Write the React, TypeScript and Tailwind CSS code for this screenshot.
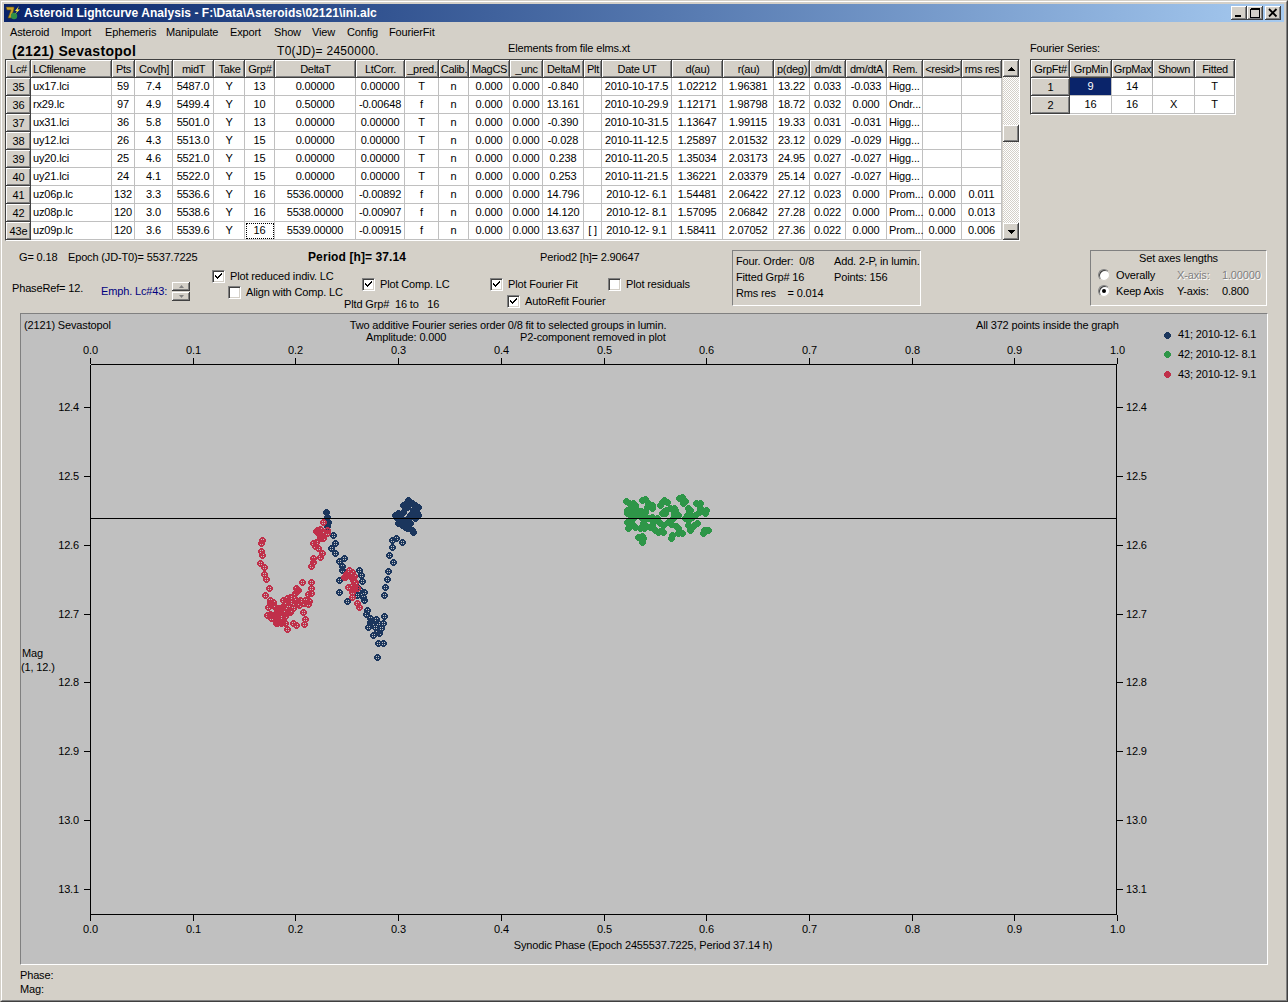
import React from "react";

const raised =
  "shadow-[inset_-1px_-1px_0_#404040,inset_1px_1px_0_#ffffff,inset_-2px_-2px_0_#808080] bg-[#d4d0c8]";

const gridCols =
  "grid grid-cols-[25px_81px_23px_38px_41px_31px_30px_81px_49px_34px_30px_41px_33px_41px_18px_70px_51px_51px_36px_36px_41px_36px_39px_40px]";

const headers = ["Lc#", "LCfilename", "Pts", "Cov[h]", "midT", "Take", "Grp#", "DeltaT", "LtCorr.", "_pred.", "Calib.", "MagCS", "_unc", "DeltaM", "Plt", "Date UT", "d(au)", "r(au)", "p(deg)", "dm/dt", "dm/dtA", "Rem.", "<resid>", "rms res"];

const rows: string[][] = [
  ["35", "ux17.lci", "59", "7.4", "5487.0", "Y", "13", "0.00000", "0.00000", "T", "n", "0.000", "0.000", "-0.840", "", "2010-10-17.5", "1.02212", "1.96381", "13.22", "0.033", "-0.033", "Higg...", "", ""],
  ["36", "rx29.lc", "97", "4.9", "5499.4", "Y", "10", "0.50000", "-0.00648", "f", "n", "0.000", "0.000", "13.161", "", "2010-10-29.9", "1.12171", "1.98798", "18.72", "0.032", "0.000", "Ondr...", "", ""],
  ["37", "ux31.lci", "36", "5.8", "5501.0", "Y", "13", "0.00000", "0.00000", "T", "n", "0.000", "0.000", "-0.390", "", "2010-10-31.5", "1.13647", "1.99115", "19.33", "0.031", "-0.031", "Higg...", "", ""],
  ["38", "uy12.lci", "26", "4.3", "5513.0", "Y", "15", "0.00000", "0.00000", "T", "n", "0.000", "0.000", "-0.028", "", "2010-11-12.5", "1.25897", "2.01532", "23.12", "0.029", "-0.029", "Higg...", "", ""],
  ["39", "uy20.lci", "25", "4.6", "5521.0", "Y", "15", "0.00000", "0.00000", "T", "n", "0.000", "0.000", "0.238", "", "2010-11-20.5", "1.35034", "2.03173", "24.95", "0.027", "-0.027", "Higg...", "", ""],
  ["40", "uy21.lci", "24", "4.1", "5522.0", "Y", "15", "0.00000", "0.00000", "T", "n", "0.000", "0.000", "0.253", "", "2010-11-21.5", "1.36221", "2.03379", "25.14", "0.027", "-0.027", "Higg...", "", ""],
  ["41", "uz06p.lc", "132", "3.3", "5536.6", "Y", "16", "5536.00000", "-0.00892", "f", "n", "0.000", "0.000", "14.796", "", "2010-12- 6.1", "1.54481", "2.06422", "27.12", "0.023", "0.000", "Prom...", "0.000", "0.011"],
  ["42", "uz08p.lc", "120", "3.0", "5538.6", "Y", "16", "5538.00000", "-0.00907", "f", "n", "0.000", "0.000", "14.120", "", "2010-12- 8.1", "1.57095", "2.06842", "27.28", "0.022", "0.000", "Prom...", "0.000", "0.013"],
  ["43e", "uz09p.lc", "120", "3.6", "5539.6", "Y", "16", "5539.00000", "-0.00915", "f", "n", "0.000", "0.000", "13.637", "[ ]", "2010-12- 9.1", "1.58411", "2.07052", "27.36", "0.022", "0.000", "Prom...", "0.000", "0.006"],
];

const clover = ["..XXX..", ".XXXXX.", "XX.X.XX", "XXXXXXX", "XX.X.XX", ".XXXXX.", "..XXX.."];
const solid = ["..XXX..", ".XXXXX.", "XXXXXXX", "XXXXXXX", "XXXXXXX", ".XXXXX.", "..XXX.."];

function Sprite({ id, pattern }: { id: string; pattern: string[] }) {
  return (
    <g id={id}>
      {pattern.flatMap((row, y) =>
        row.split("").map((c, x) => (c === "X" ? <rect key={`${x}-${y}`} x={x - 3} y={y - 3} width={1} height={1} /> : null))
      )}
    </g>
  );
}

const z5 = (p: number[]) => [Math.round(240 + p[0] / 3), Math.round(490 + p[1] / 3)];
const z6 = (p: number[]) => [Math.round(610 + p[0] / 3), Math.round(485 + p[1] / 3)];

// Fixed jitter so that dense clusters fill in as they do in the reference
const jitter = [[8, 6], [-9, 5], [6, -8], [-7, -6], [11, -2], [-3, 10], [2, -11], [-11, -1]];
const thicken = (pts: number[][]) =>
  pts.flatMap((p, i) => [p, [p[0] + jitter[i % 8][0], p[1] + jitter[i % 8][1]]]);

const navyClover = [[280,135],[285,158],[272,175],[285,190],[313,205],[298,213],[305,228],[305,240],[358,240],[362,255],[365,272],[297,270],[350,290],[298,305],[372,305],[350,315],[322,332],[372,330],[382,360],[378,372],[390,385],[432,378],[428,398],[408,388],[385,410],[405,410],[422,415],[400,435],[418,430],[415,460],[428,460],[412,502],[432,316],[436,290],[440,268],[445,242],[460,217],[448,195],[455,172],[455,150],[468,145],[487,157],[395,400],[415,400],[410,425],[390,395],[370,320],[360,300]].map(z5);
const navySolid = [[258,65],[262,80],[265,95],[262,108],[505,30],[525,45],[500,50],[530,70],[510,75],[475,70],[490,90],[475,100],[500,100],[515,120],[470,85],[520,60],[495,110],[505,85],[490,65],[490,45],[535,50],[535,75],[525,85],[480,80],[510,100],[520,125],[500,35],[465,75],[485,105],[515,40],[500,115],[480,90]].map(z5);
const redCore = [[90,330],[100,335],[85,350],[105,350],[80,375],[95,375],[110,370],[125,355],[130,330],[150,320],[165,310],[175,300],[203,312],[195,330],[205,343],[180,330],[170,340],[160,355],[145,345],[135,365],[125,380],[115,390],[107,400],[135,400],[160,400],[150,365],[120,360],[110,380]];
const redTop = [[225,168],[228,155],[240,145],[235,130],[230,120],[245,130],[260,130],[250,145]];
const redMid = [[328,240],[320,255],[335,265],[345,275],[325,290],[340,297],[315,262],[350,295]];
const redOther = [[67,150],[64,160],[62,183],[65,195],[60,220],[72,230],[73,253],[78,268],[88,295],[75,315],[185,277],[212,275],[212,295],[140,418],[190,365],[195,388],[192,403],[218,205],[220,215],[214,227],[245,190],[240,200],[250,95],[335,320],[352,340],[358,352]];
const redClover = [...redOther, ...thicken(redCore), ...thicken(redTop), ...thicken(redMid)].map(z5);
const greenSolid = thicken([[48,48],[60,70],[50,85],[75,60],[95,45],[115,55],[125,70],[105,80],[85,90],[60,105],[55,130],[75,125],[85,155],[100,160],[100,115],[120,125],[135,135],[140,100],[150,60],[170,50],[180,70],[195,75],[165,85],[160,140],[150,115],[215,35],[220,55],[240,75],[258,55],[270,70],[285,85],[245,95],[235,120],[260,115],[240,135],[205,130],[205,145],[185,150],[280,145],[295,135],[175,110],[125,95],[230,90],[70,100],[90,130],[130,110],[190,100],[255,90],[225,100],[80,75],[155,85],[205,90],[110,100]]).map(z6);

const xTick = (i: number) => Math.round(90 + 102.7 * i) + 0.5;
const yVals = [["12.4", 407], ["12.5", 476], ["12.6", 545], ["12.7", 614], ["12.8", 682], ["12.9", 751], ["13.0", 820], ["13.1", 889]] as [string, number][];

function Plot() {
  const ticks = Array.from({ length: 11 }, (_, i) => i);
  return (
    <svg viewBox="21 314 1246 650" width={1246} height={650} className="block text-[11px]">
      <defs>
        <Sprite id="clover" pattern={clover} />
        <Sprite id="solid" pattern={solid} />
      </defs>
      <text x={24} y={329}>(2121) Sevastopol</text>
      <text x={508} y={329} textAnchor="middle">Two additive Fourier series order 0/8 fit to selected groups in lumin.</text>
      <text x={366} y={341}>Amplitude: 0.000</text>
      <text x={520} y={341}>P2-component removed in plot</text>
      <text x={976} y={329}>All 372 points inside the graph</text>
      <g stroke="#000" shapeRendering="crispEdges" fill="none">
        <path d="M90.5 364.5H1117M90.5 914.5H1117M90.5 364.5V915M1116.5 364.5V915" />
        {ticks.map((i) => (
          <path key={i} d={`M${xTick(i)} 358V364M${xTick(i)} 915V921`} />
        ))}
        {yVals.map(([l, y]) => (
          <path key={l} d={`M84 ${y + 0.5}H90M1117 ${y + 0.5}H1123`} />
        ))}
      </g>
      {ticks.map((i) => (
        <g key={i} textAnchor="middle">
          <text x={xTick(i)} y={354}>{(i / 10).toFixed(1)}</text>
          <text x={xTick(i)} y={933}>{(i / 10).toFixed(1)}</text>
        </g>
      ))}
      {yVals.map(([l, y]) => (
        <g key={l}>
          <text x={79} y={y + 4} textAnchor="end">{l}</text>
          <text x={1126} y={y + 4}>{l}</text>
        </g>
      ))}
      <text x={643} y={949} textAnchor="middle">Synodic Phase (Epoch 2455537.7225, Period 37.14 h)</text>
      <text x={22} y={657}>Mag</text>
      <text x={21} y={671}>(1, 12.)</text>
      <g shapeRendering="crispEdges">
        <g fill="#1b365d">
          {navySolid.map(([x, y], i) => <use key={i} href="#solid" x={x} y={y} />)}
          {navyClover.map(([x, y], i) => <use key={i} href="#clover" x={x} y={y} />)}
        </g>
        <g fill="#2e9648">
          {greenSolid.map(([x, y], i) => <use key={i} href="#solid" x={x} y={y} />)}
        </g>
        <g fill="#c0304a">
          {redClover.map(([x, y], i) => <use key={i} href="#clover" x={x} y={y} />)}
        </g>
        <path d="M90 518.5H1116.5" stroke="#000" fill="none" />
        <use href="#solid" x={1167} y={335} fill="#1b365d" />
        <use href="#solid" x={1167} y={354} fill="#2e9648" />
        <use href="#solid" x={1167} y={374} fill="#c0304a" />
      </g>
      <text x={1178} y={338}>41; 2010-12- 6.1</text>
      <text x={1178} y={358}>42; 2010-12- 8.1</text>
      <text x={1178} y={378}>43; 2010-12- 9.1</text>
    </svg>
  );
}

function Check({ on, label, className }: { on: boolean; label: string; className?: string }) {
  return (
    <div className={`flex items-center h-[13px] whitespace-nowrap ${className ?? ""}`}>
      <span className="w-[13px] h-[13px] bg-white border border-t-[#808080] border-l-[#808080] border-r-white border-b-white shadow-[inset_1px_1px_0_#404040,inset_-1px_-1px_0_#d4d0c8] flex items-center justify-center shrink-0">
        {on && (
          <svg width="9" height="9" viewBox="0 0 9 9" shapeRendering="crispEdges">
            <path d="M1 3h1v1h1v1h1V4h1V3h1V2h1V1h1v2H7v1H6v1H5v1H4v1H3V6H2V5H1z" fill="#000" />
          </svg>
        )}
      </span>
      <span className="ml-[5px]">{label}</span>
    </div>
  );
}

function Radio({ on }: { on: boolean }) {
  return (
    <span className="w-[12px] h-[12px] rounded-full bg-white border border-t-[#808080] border-l-[#808080] border-r-[#d4d0c8] border-b-[#d4d0c8] shadow-[inset_1px_1px_0_#404040] flex items-center justify-center shrink-0">
      {on && <span className="w-[4px] h-[4px] rounded-full bg-black" />}
    </span>
  );
}

function Logo() {
  return (
    <svg width="16" height="16" viewBox="0 0 16 16" className="shrink-0">
      <rect width="16" height="16" fill="#0a246a" />
      <path d="M1 2H9V4L6 13H3L6 5H2Z" fill="#c9a227" stroke="#5a4a10" strokeWidth="0.6" />
      <circle cx="9" cy="11" r="3.2" fill="#2f8f46" />
      <path d="M14 1L10 6L12 6L10 9L15 4.5L12.5 4.5Z" fill="#ffe93b" />
    </svg>
  );
}

export default function App() {
  return (
    <div className="w-[1288px] h-[1002px] overflow-hidden bg-[#d4d0c8] text-[11px] leading-none tracking-[-0.15px] text-black font-['Liberation_Sans',Arial,sans-serif] border border-t-[#d4d0c8] border-l-[#d4d0c8] border-r-[#404040] border-b-[#404040]">
      <div className="h-full border border-t-white border-l-white border-r-[#808080] border-b-[#808080] p-[2px] flex flex-col">
        {/* Title bar */}
        <div className="h-[18px] shrink-0 flex items-center pl-[1px] pr-[3px] bg-gradient-to-r from-[#0a246a] to-[#a6caf0]">
          <Logo />
          <span className="ml-[3px] text-white font-bold text-[12px] tracking-[0.05px]">Asteroid Lightcurve Analysis - F:\Data\Asteroids\02121\ini.alc</span>
          <div className="ml-auto flex items-center">
            <span className={`w-[16px] h-[14px] ${raised} flex items-center justify-center`}>
              <svg width="10" height="10" shapeRendering="crispEdges"><rect x="1" y="7" width="6" height="2" fill="#000" /></svg>
            </span>
            <span className={`w-[16px] h-[14px] ${raised} flex items-center justify-center`}>
              <svg width="10" height="10" shapeRendering="crispEdges"><path d="M0.5 1.5H9.5V9.5H0.5Z M0.5 0.5H9.5" fill="none" stroke="#000" /></svg>
            </span>
            <span className={`w-[16px] h-[14px] ml-[2px] ${raised} flex items-center justify-center`}>
              <svg width="10" height="10"><path d="M1 1L8.5 8.5M8.5 1L1 8.5" stroke="#000" strokeWidth="1.8" /></svg>
            </span>
          </div>
        </div>
        {/* Menu */}
        <div className="h-[20px] shrink-0 flex items-center pl-[6px] pt-[1px]">
          <span className="w-[51px]">Asteroid</span>
          <span className="w-[44px]">Import</span>
          <span className="w-[61px]">Ephemeris</span>
          <span className="w-[64px]">Manipulate</span>
          <span className="w-[44px]">Export</span>
          <span className="w-[38px]">Show</span>
          <span className="w-[35px]">View</span>
          <span className="w-[42px]">Config</span>
          <span>FourierFit</span>
        </div>
        {/* Name line */}
        <div className="h-[17px] shrink-0 flex items-center">
          <span className="w-[273px] pl-[8px] font-bold text-[14px] tracking-[0.3px]">(2121) Sevastopol</span>
          <span className="w-[231px] text-[12px] tracking-[0.3px]">T0(JD)= 2450000.</span>
          <span className="w-[522px] self-start pt-[1px]">Elements from file elms.xt</span>
          <span className="self-start pt-[1px]">Fourier Series:</span>
        </div>
        {/* Tables */}
        <div className="h-[182px] shrink-0 flex items-start">
          <div className="ml-[1px] w-[1015px] h-[182px] flex border-t border-l border-t-[#404040] border-l-[#404040] border-r border-b border-r-white border-b-white">
            <div className="w-[996px]">
              <div className={`${gridCols} h-[18px]`}>
                {headers.map((h, i) => (
                  <div key={h} className={`${raised} flex items-center whitespace-nowrap tracking-[-0.3px] ${i === 1 ? "justify-start pl-[2px]" : "justify-center"}`}>
                    {h}
                  </div>
                ))}
              </div>
              {rows.map((r, ri) => (
                <div key={r[0]} className={`${gridCols} h-[18px] bg-white`}>
                  {r.map((c, i) => {
                    if (i === 0)
                      return (
                        <div key={i} className={`${raised} flex items-center justify-center`}>{c}</div>
                      );
                    const left = i === 1 || i === 21;
                    const focus = ri === 8 && i === 6;
                    return (
                      <div
                        key={i}
                        className={`flex items-center whitespace-pre border-r border-b border-r-[#c0c0c0] border-b-[#c0c0c0] ${left ? "justify-start pl-[2px]" : "justify-center"} ${focus ? "outline outline-1 outline-dotted outline-black -outline-offset-2" : ""}`}
                      >
                        {c}
                      </div>
                    );
                  })}
                </div>
              ))}
            </div>
            {/* Scrollbar */}
            <div className="w-[17px] ml-[1px] flex flex-col bg-[repeating-conic-gradient(#d4d0c8_0_25%,#ffffff_0_50%)] bg-[length:2px_2px]">
              <div className={`h-[17px] ${raised} flex items-center justify-center`}>
                <svg width="9" height="6" shapeRendering="crispEdges"><path d="M4.5 1L8 5H1Z" fill="#000" /></svg>
              </div>
              <div className="h-[48px]" />
              <div className={`h-[17px] ${raised}`} />
              <div className="flex-1" />
              <div className={`h-[17px] ${raised} flex items-center justify-center`}>
                <svg width="9" height="6" shapeRendering="crispEdges"><path d="M4.5 5L8 1H1Z" fill="#000" /></svg>
              </div>
            </div>
          </div>
          <div className="ml-[10px] w-[206px] h-[56px] border-t border-l border-t-[#404040] border-l-[#404040] border-r border-b border-r-white border-b-white">
            <div className="grid grid-cols-[39px_42px_41px_42px_40px] h-[18px]">
              {["GrpFt#", "GrpMin", "GrpMax", "Shown", "Fitted"].map((h) => (
                <div key={h} className={`${raised} flex items-center justify-center whitespace-nowrap tracking-[-0.3px]`}>{h}</div>
              ))}
            </div>
            {[["1", "9", "14", "", "T"], ["2", "16", "16", "X", "T"]].map((r, ri) => (
              <div key={r[0]} className="grid grid-cols-[39px_42px_41px_42px_40px] h-[18px] bg-white">
                {r.map((c, i) =>
                  i === 0 ? (
                    <div key={i} className={`${raised} flex items-center justify-center`}>{c}</div>
                  ) : (
                    <div
                      key={i}
                      className={`flex items-center justify-center border-r border-b border-r-[#c0c0c0] border-b-[#c0c0c0] ${ri === 0 && i === 1 ? "bg-[#0a246a] text-white" : ""}`}
                    >
                      {c}
                    </div>
                  )
                )}
              </div>
            ))}
          </div>
        </div>
        {/* Controls */}
        <div className="h-[72px] shrink-0 flex">
          <div className="w-[208px] shrink-0">
            <div className="h-[27px] flex items-center pl-[15px] pt-[5px]">
              <span className="w-[49px]">G= 0.18</span>
              <span>Epoch (JD-T0)= 5537.7225</span>
            </div>
            <div className="flex items-center pl-[8px] mt-[14px]">
              <span className="w-[89px] pb-[6px]">PhaseRef= 12.</span>
              <span className="text-[#000080] w-[71px]">Emph. Lc#43:</span>
              <div className="w-[18px] h-[19px] flex flex-col gap-[1px]">
                <span className={`h-[9px] ${raised} flex items-center justify-center`}>
                  <svg width="5" height="3"><path d="M2.5 0L5 3H0Z" fill="#808080" /></svg>
                </span>
                <span className={`h-[9px] ${raised} flex items-center justify-center`}>
                  <svg width="5" height="3"><path d="M2.5 3L5 0H0Z" fill="#808080" /></svg>
                </span>
              </div>
            </div>
          </div>
          <div className="w-[520px] shrink-0">
            <div className="h-[27px] flex items-center pt-[5px]">
              <span className="w-[328px] pl-[96px] font-bold text-[12px] tracking-[0.1px]">Period [h]= 37.14</span>
              <span>Period2 [h]= 2.90647</span>
            </div>
            <div className="flex">
              <div className="w-[132px] pt-[2px]">
                <Check on label="Plot reduced indiv. LC" />
                <Check on={false} label="Align with Comp. LC" className="mt-[3px] ml-[16px]" />
              </div>
              <div className="w-[146px] pt-[10px]">
                <Check on label="Plot Comp. LC" className="ml-[18px]" />
                <div className="mt-[8px] whitespace-pre">Pltd Grp#  16 to   16</div>
              </div>
              <div className="w-[118px] pt-[10px]">
                <Check on label="Plot Fourier Fit" />
                <Check on label="AutoRefit Fourier" className="mt-[4px] ml-[17px]" />
              </div>
              <div className="pt-[10px]">
                <Check on={false} label="Plot residuals" />
              </div>
            </div>
          </div>
          <div className="shrink-0 mt-[9px] w-[189px] h-[56px] border border-t-[#808080] border-l-[#808080] border-r-white border-b-white grid grid-cols-[98px_1fr] auto-rows-[16px] pl-[3px] pt-[2px] whitespace-pre items-center">
            <span>Four. Order:  0/8</span>
            <span>Add. 2-P, in lumin.</span>
            <span>Fitted Grp# 16</span>
            <span>Points: 156</span>
            <span>Rms res    = 0.014</span>
          </div>
          <div className="shrink-0 ml-[169px] mt-[9px] w-[177px] h-[56px] border border-t-[#808080] border-l-[#808080] border-r-white border-b-white pl-[7px] pt-[2px]">
            <div className="h-[11px] text-center pr-[7px]">Set axes lengths</div>
            <div className="flex items-center h-[16px] mt-[3px]">
              <Radio on={false} />
              <span className="ml-[6px] w-[61px]">Overally</span>
              <span className="w-[45px] text-[#808080] [text-shadow:1px_1px_0_#ffffff]">X-axis:</span>
              <span className="text-[#808080] [text-shadow:1px_1px_0_#ffffff]">1.00000</span>
            </div>
            <div className="flex items-center h-[16px]">
              <Radio on />
              <span className="ml-[6px] w-[61px]">Keep Axis</span>
              <span className="w-[45px]">Y-axis:</span>
              <span>0.800</span>
            </div>
          </div>
        </div>
        {/* Plot panel */}
        <div className="ml-[16px] w-[1248px] h-[652px] shrink-0 bg-[#c0c0c0] border border-t-[#808080] border-l-[#808080] border-r-white border-b-white">
          <Plot />
        </div>
        {/* Status */}
        <div className="pl-[16px] pt-[5px] flex flex-col gap-[3px]">
          <span className="h-[11px]">Phase:</span>
          <span className="h-[11px]">Mag:</span>
        </div>
      </div>
    </div>
  );
}
